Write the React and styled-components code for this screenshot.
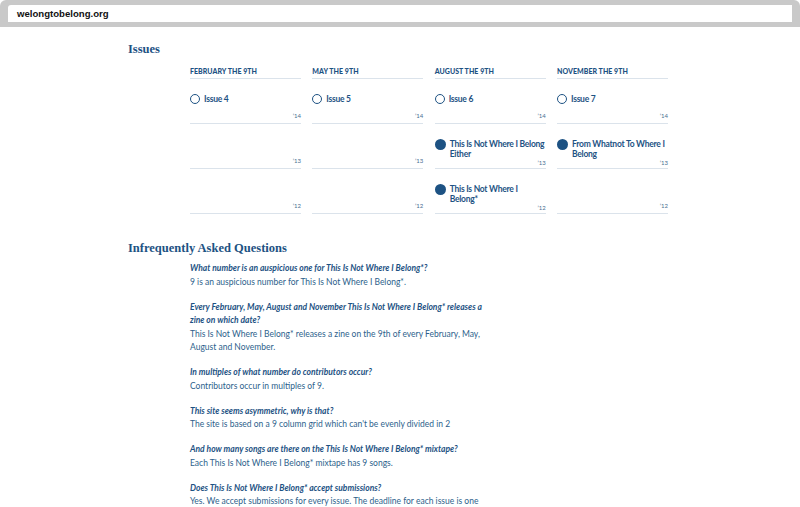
import React from 'react';
import styled, { createGlobalStyle } from 'styled-components';

const GlobalStyle = createGlobalStyle`
  html, body { margin: 0; padding: 0; background: #fff; }
  body { font-family: Lato, "Open Sans", sans-serif; color: #1d5283; }
`;

const issueColumns = [
  {
    month: 'February the 9th',
    rows: [
      { title: 'Issue 4', year: '14', done: false },
      { year: '13' },
      { year: '12' },
    ],
  },
  {
    month: 'May the 9th',
    rows: [
      { title: 'Issue 5', year: '14', done: false },
      { year: '13' },
      { year: '12' },
    ],
  },
  {
    month: 'August the 9th',
    rows: [
      { title: 'Issue 6', year: '14', done: false },
      { title: 'This Is Not Where I Belong Either', year: '13', done: true },
      { title: 'This Is Not Where I Belong*', year: '12', done: true },
    ],
  },
  {
    month: 'November the 9th',
    rows: [
      { title: 'Issue 7', year: '14', done: false },
      { title: 'From Whatnot To Where I Belong', year: '13', done: true },
      { year: '12' },
    ],
  },
];

const faqs = [
  {
    q: 'What number is an auspicious one for This Is Not Where I Belong*?',
    a: '9 is an auspicious number for This Is Not Where I Belong*.',
  },
  {
    q: 'Every February, May, August and November This Is Not Where I Belong* releases a zine on which date?',
    a: 'This Is Not Where I Belong* releases a zine on the 9th of every February, May, August and November.',
  },
  {
    q: 'In multiples of what number do contributors occur?',
    a: 'Contributors occur in multiples of 9.',
  },
  {
    q: 'This site seems asymmetric, why is that?',
    a: "The site is based on a 9 column grid which can't be evenly divided in 2",
  },
  {
    q: 'And how many songs are there on the This Is Not Where I Belong* mixtape?',
    a: 'Each This Is Not Where I Belong* mixtape has 9 songs.',
  },
  {
    q: 'Does This Is Not Where I Belong* accept submissions?',
    a: 'Yes. We accept submissions for every issue. The deadline for each issue is one month before the release date.',
  },
];

function App() {
  return (
    <Page>
      <GlobalStyle />
      <BrowserBar>
        <AddressBar>welongtobelong.org</AddressBar>
      </BrowserBar>
      <Content>
        <SectionTitle>Issues</SectionTitle>
        <IssueGrid>
          {issueColumns.map(({ month, rows }) => (
            <Column key={month}>
              <MonthLabel>{month}</MonthLabel>
              {rows.map((row) => (
                <IssueCell key={row.year}>
                  {row.title && (
                    <IssueTitle>
                      <Dot $filled={row.done} />
                      <span>{row.title}</span>
                    </IssueTitle>
                  )}
                  <Year>&#8217;{row.year}</Year>
                </IssueCell>
              ))}
            </Column>
          ))}
        </IssueGrid>
        <SectionTitle $spaced>Infrequently Asked Questions</SectionTitle>
        <FaqList>
          {faqs.map(({ q, a }) => (
            <FaqItem key={q}>
              <Question>{q}</Question>
              <Answer>{a}</Answer>
            </FaqItem>
          ))}
        </FaqList>
      </Content>
    </Page>
  );
}

const Page = styled.div`
  width: 800px;
  height: 507px;
  overflow: hidden;
  background: #fff;
`;

const BrowserBar = styled.div`
  background: #c9c9c9;
  padding: 5px 8px;
  border-radius: 6px 6px 0 0;
  height: 17px;
`;

const AddressBar = styled.div`
  background: #fff;
  height: 17px;
  padding-left: 9px;
  font-family: "Liberation Sans", Arial, sans-serif;
  font-weight: bold;
  font-size: 9.6px;
  line-height: 17px;
  color: #111;
  border-radius: 3px 0 0 0;
`;

const Content = styled.main`
  padding: 14px 0 0 128px;
`;

const SectionTitle = styled.h2`
  margin: ${(p) => (p.$spaced ? '26px' : '0')} 0 0 0;
  font-family: "Liberation Serif", "DejaVu Serif", serif;
  font-weight: bold;
  font-size: 12.5px;
  line-height: 16px;
  color: #1d5283;
`;

const IssueGrid = styled.div`
  display: grid;
  grid-template-columns: repeat(4, 111px);
  column-gap: 11.33px;
  margin: 9px 0 0 62px;
`;

const Column = styled.div`
  display: flex;
  flex-direction: column;
`;

const MonthLabel = styled.div`
  font-size: 7px;
  font-weight: 900;
  letter-spacing: 0.05px;
  text-transform: uppercase;
  line-height: 10px;
  padding-bottom: 2px;
  border-bottom: 1.5px solid #dbe3eb;
`;

const IssueCell = styled.div`
  height: 45px;
  padding-top: 16px;
  box-sizing: border-box;
  display: flex;
  flex-direction: column;
  border-bottom: 1.5px solid #dbe3eb;
`;

const IssueTitle = styled.div`
  display: flex;
  align-items: flex-start;
  gap: 4px;
  font-size: 8.5px;
  font-weight: bold;
  letter-spacing: -0.25px;
  line-height: 9.5px;
`;

const Dot = styled.span`
  flex: none;
  width: ${(p) => (p.$filled ? '11px' : '8px')};
  height: ${(p) => (p.$filled ? '11px' : '8px')};
  margin-top: -1px;
  border-radius: 50%;
  border: ${(p) => (p.$filled ? 'none' : '1.5px solid #1d5283')};
  background: ${(p) => (p.$filled ? '#1d5283' : 'transparent')};
`;

const Year = styled.div`
  margin-top: auto;
  padding-bottom: 3px;
  text-align: right;
  font-size: 6px;
  line-height: 8px;
  color: #4a6f92;
`;

const FaqList = styled.div`
  margin: 6px 0 0 62px;
  width: 296px;
`;

const FaqItem = styled.div`
  margin-bottom: 11.5px;
  font-size: 8.5px;
  line-height: 13.5px;
`;

const Question = styled.div`
  font-weight: bold;
  font-style: italic;
  color: #1d5283;
`;

const Answer = styled.div`
  color: #2d5f8c;
`;

export default App;
